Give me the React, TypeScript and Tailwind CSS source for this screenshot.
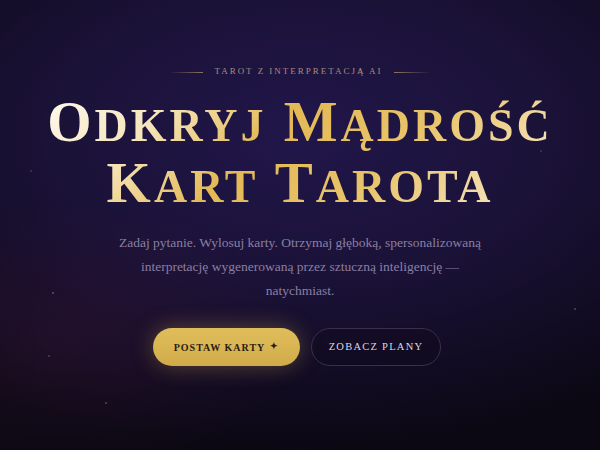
import React from "react";

const stars = [
  { x: 52, y: 292, s: 2, o: 0.35 },
  { x: 48, y: 355, s: 2, o: 0.25 },
  { x: 105, y: 402, s: 1.5, o: 0.3 },
  { x: 574, y: 308, s: 2, o: 0.3 },
  { x: 540, y: 150, s: 1.5, o: 0.2 },
  { x: 30, y: 170, s: 1.5, o: 0.2 },
];

export default function App() {
  return (
    <div className="relative w-full h-[450px] overflow-hidden bg-[radial-gradient(ellipse_90%_70%_at_50%_30%,#21164a_0%,#1b1238_45%,#120c24_75%,#0b0813_100%)] flex flex-col items-center pt-[64px]">
      <div className="pointer-events-none absolute inset-0 bg-[radial-gradient(ellipse_40%_30%_at_10%_75%,rgba(70,25,60,0.3)_0%,rgba(0,0,0,0)_100%)]" />
      {stars.map((st, i) => (
        <div
          key={i}
          className="absolute rounded-full bg-[#d9cce8]"
          style={{ left: st.x, top: st.y, width: st.s, height: st.s, opacity: st.o }}
        />
      ))}

      <div className="relative flex items-center h-[16px] gap-[11px]">
        <div className="w-[34px] h-px bg-[linear-gradient(90deg,rgba(160,130,110,0)_0%,#8c7363_100%)]" />
        <span className="font-['Liberation_Serif',serif] text-[9px] tracking-[0.22em] text-[#a88c7a] uppercase">
          Tarot z interpretacją AI
        </span>
        <div className="w-[37px] h-px bg-[linear-gradient(90deg,#8c7363_0%,rgba(160,130,110,0)_100%)]" />
      </div>

      <h1 className="relative mt-[11px] w-fit text-center font-['Liberation_Serif',serif] font-bold text-[57px] leading-[61px] tracking-[3px] text-transparent bg-clip-text bg-[linear-gradient(135deg,#fffaf0_0%,#f6e5ba_22%,#e3b955_42%,#e8c46a_66%,#f9efda_100%)]">
        <span>O</span>
        <span className="text-[46px] leading-[46px] uppercase">dkryj</span>{" "}
        <span>M</span>
        <span className="text-[46px] leading-[46px] uppercase">ądrość</span>
        <br />
        <span>K</span>
        <span className="text-[46px] leading-[46px] uppercase">art</span>{" "}
        <span>T</span>
        <span className="text-[46px] leading-[46px] uppercase">arota</span>
      </h1>

      <p className="relative mt-[18px] max-w-[372px] text-center font-['Liberation_Serif',serif] text-[13.5px] leading-[24px] text-[#8a7fa3]">
        Zadaj pytanie. Wylosuj karty. Otrzymaj głęboką, spersonalizowaną
        interpretację wygenerowaną przez sztuczną inteligencję — natychmiast.
      </p>

      <div className="relative mt-[25px] mr-[6px] flex items-center gap-[11px]">
        <button className="h-[38px] w-[147px] rounded-full bg-[linear-gradient(180deg,#e0bd5c_0%,#d1ab49_100%)] shadow-[0_0_22px_rgba(214,176,80,0.35)] font-['Liberation_Serif',serif] font-bold text-[10px] tracking-[0.1em] text-[#2a1c14] uppercase flex items-center justify-center gap-[5px]">
          Postaw karty <span className="text-[9px]">✦</span>
        </button>
        <button className="h-[38px] w-[130px] rounded-full border border-[#3a2f4c] bg-[#0f0a1c]/40 font-['Liberation_Serif',serif] text-[10.5px] tracking-[0.12em] text-[#ddd6e6] uppercase">
          Zobacz plany
        </button>
      </div>
    </div>
  );
}
